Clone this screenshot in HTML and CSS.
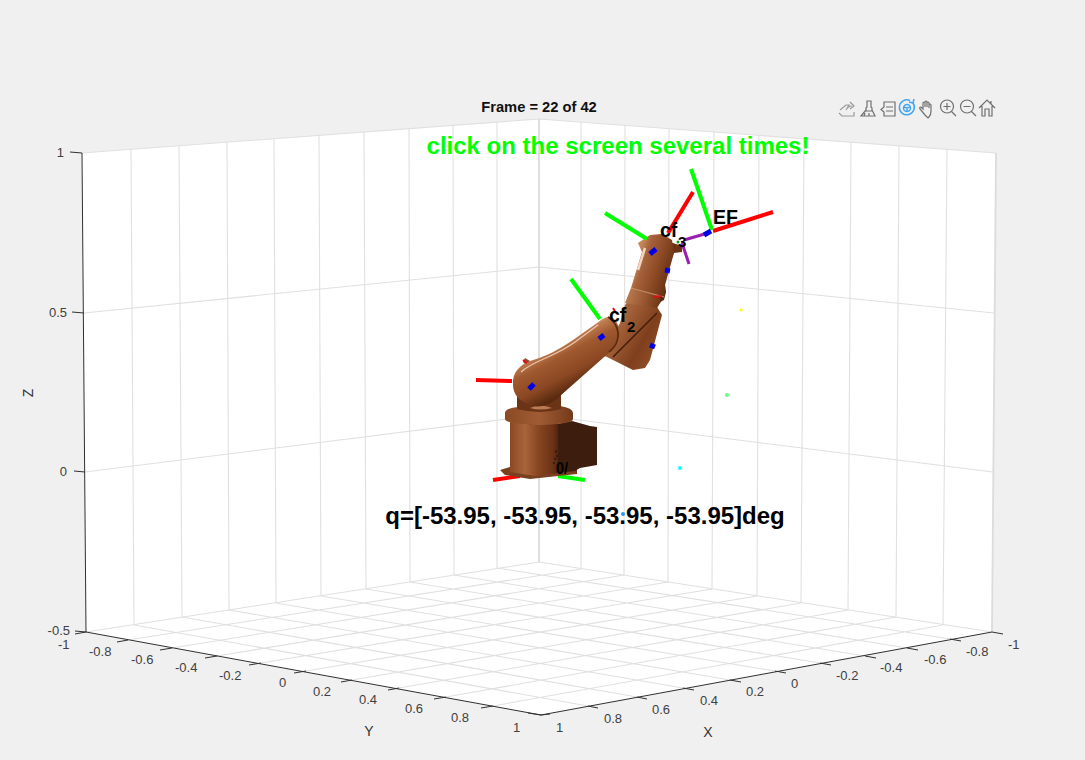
FILE: index.html
```html
<!DOCTYPE html>
<html lang="en">
<head>
<meta charset="utf-8">
<title>Frame = 22 of 42</title>
<link rel="stylesheet" href="styles.css">
</head>
<body>
<svg class="figure" width="1085" height="760" viewBox="0 0 1085 760" xmlns="http://www.w3.org/2000/svg">
<defs>
<linearGradient id="g-base" gradientUnits="userSpaceOnUse" x1="510" x2="560" y1="0" y2="0"><stop offset="0" stop-color="#8c4824"/><stop offset=".3" stop-color="#a8653c"/><stop offset=".55" stop-color="#8a4722"/><stop offset=".85" stop-color="#6b3316"/><stop offset="1" stop-color="#47210d"/></linearGradient>
<linearGradient id="g-flange" gradientUnits="userSpaceOnUse" x1="505" x2="573" y1="0" y2="0"><stop offset="0" stop-color="#8a4a24"/><stop offset=".5" stop-color="#a05c34"/><stop offset="1" stop-color="#74391a"/></linearGradient>
<linearGradient id="g-lower" gradientUnits="userSpaceOnUse" x1="546" x2="570" y1="344" y2="390"><stop offset="0" stop-color="#f0c8ae"/><stop offset=".12" stop-color="#c07d52"/><stop offset=".35" stop-color="#a0592f"/><stop offset=".72" stop-color="#8a4722"/><stop offset="1" stop-color="#5a2a10"/></linearGradient>
<linearGradient id="g-upper" gradientUnits="userSpaceOnUse" x1="636" x2="672" y1="262" y2="274"><stop offset="0" stop-color="#c58558"/><stop offset=".2" stop-color="#a5613a"/><stop offset=".6" stop-color="#8a4824"/><stop offset="1" stop-color="#643014"/></linearGradient>
<linearGradient id="g-band" gradientUnits="userSpaceOnUse" x1="628" x2="662" y1="294" y2="302"><stop offset="0" stop-color="#b87a50"/><stop offset=".45" stop-color="#9c5a32"/><stop offset="1" stop-color="#6a3315"/></linearGradient>
<linearGradient id="g-elbow" gradientUnits="userSpaceOnUse" x1="622" x2="662" y1="322" y2="345"><stop offset="0" stop-color="#a5623a"/><stop offset=".6" stop-color="#7f3f1d"/><stop offset="1" stop-color="#8f4e28"/></linearGradient>
</defs>
<polygon class="wall" points="82,153 539,119 996,153 992,632 541,715 86,632"/>
<path class="grid" d="M82 153L539 119L996 153M84 313L539 267L994 313M85 472L539 415L993 472M86 632L539 562L992 632"/>
<path class="grid" d="M131 149L134 625M179 146L182 617M227 142L229 610M274 139L276 603M319 135L321 596M364 132L366 589M409 129L410 582M453 125L454 575M497 122L497 568M581 122L581 569M625 125L624 575M669 129L668 582M714 132L712 589M759 135L757 596M804 139L801 603M851 142L848 610M899 146L896 617M947 149L943 625"/>
<path class="grid-strong" d="M539 119L539 562M996 153L992 632"/>
<path class="grid" d="M128 640L581 569M172 648L624 575M217 656L668 582M261 663L712 589M306 671L757 596M352 680L801 603M399 688L848 610M446 697L896 617M493 706L943 625M134 625L588 706M182 617L637 697M229 610L683 688M276 603L730 680M321 596L775 671M366 589L820 663M410 582L865 656M454 575L907 648M497 568L950 639"/>
<path class="axis" d="M82 153L86 632L541 715L992 632"/>
<path class="axis" d="M82 153L70 152M84 313L72 312M85 472L74 471M86 632L75 631M86 632L75 634M128 640L117 642M172 648L160 650M217 656L205 658M261 663L249 665M306 671L294 673M352 680L341 682M399 688L388 690M446 697L434 699M493 706L481 708M541 715L528 713M541 715L550 714M588 706L598 708M637 697L647 699M683 688L694 690M730 680L741 682M775 671L786 673M820 663L831 665M865 656L876 658M907 648L918 650M950 639L961 641M992 632L1003 634"/>
<g class="tick">
<text class="end" x="64" y="157">1</text><text class="end" x="67" y="317">0.5</text><text class="end" x="67" y="476">0</text><text class="end" x="70" y="635">-0.5</text>
<text x="58" y="649">-1</text><text x="89" y="656">-0.8</text><text x="131" y="664">-0.6</text><text x="175" y="672">-0.4</text><text x="219" y="680">-0.2</text><text x="279" y="687">0</text><text x="313" y="696">0.2</text><text x="359" y="704">0.4</text><text x="405" y="713">0.6</text><text x="451" y="722">0.8</text><text x="513" y="732">1</text>
<text x="556" y="732">1</text><text x="604" y="723">0.8</text><text x="652" y="714">0.6</text><text x="700" y="705">0.4</text><text x="746" y="696">0.2</text><text x="791" y="688">0</text><text x="836" y="680">-0.2</text><text x="880" y="672">-0.4</text><text x="924" y="664">-0.6</text><text x="966" y="656">-0.8</text><text x="1008" y="649">-1</text>
</g>
<text class="label" x="369" y="736" text-anchor="middle">Y</text>
<text class="label" x="708" y="737" text-anchor="middle">X</text>
<text class="label" transform="translate(33 393) rotate(-90)" text-anchor="middle">Z</text>
<text class="title" x="539" y="112" text-anchor="middle">Frame = 22 of 42</text>
<g class="icons">
<path class="faint" d="M840 110l6-5h3l-3 5M839 113l3 3h12v-4M846 110q2-4 6-4M850 102l4 4-4 3"/>
<path d="M867 101h4v6l1 1v3h-6v-3l1-1zM866 110l-5 6h14l-3-6M865 113l-1 3M869 113v3"/>
<path d="M884 102h11v14h-11v-4l-3-2.500 3-2.500zM886 107h7M886 111h7"/>
<g class="active"><path d="M913 103a7.500 7.500 0 1 1-3-2.500"/><circle cx="907" cy="108" r="3.500"/><path d="M914 99l-1 4-4-1"/><path d="M904 107l3 1 3-1M907 108v3"/></g>
<path d="M925 115l-5-6q-1-2 1-2l2 2v-6q1-2 2 0v4v-5q1-2 2 0v5v-4q1-2 2 0v5v-3q1-2 2 0v6q0 4-2 6l-1 1z"/>
<circle cx="947" cy="106.500" r="6.500"/><path d="M951.500 111.500l4.500 4.500M943.500 106.500h7M947 103v7"/>
<circle cx="967" cy="106.500" r="6.500"/><path d="M971.500 111.500l4.500 4.500M963.500 106.500h7"/>
<path d="M979 108l8-8 8 8M982 106v10h3v-7h4v7h3v-10M991 104v-3"/>
</g>
<text class="hint" x="618" y="154" text-anchor="middle">click on the screen several times!</text>
<path class="red" d="M476 380L512 381M493 480L520 476"/>
<path class="green" d="M558 476L585 480"/>
<g class="robot">
<path fill="#7a3f1e" d="M500 470L510 467H557L577 470V474L558 476L530 479L505 475Z"/>
<path fill="#3d1d0d" d="M557 424L572 421L590 426L597 427V465L580 468L575 471L557 473Z"/>
<path fill="url(#g-base)" d="M510 418H558V473L535 476L510 472Z"/>
<path class="speck" d="M556 450v3M557 455v2M555 458v2M554 462v2M530 424h1M537 423h1M545 424h1"/>
<path fill="url(#g-flange)" d="M505 413Q505 408 520 407L560 406Q573 408 573 413V419Q573 424 540 425Q505 424 505 419Z"/>
<path fill="#6b3416" d="M517 392H561V409Q540 415 517 409Z"/>
<path fill="#bb7c55" d="M530 408Q540 403 552 408Q540 411 530 408Z"/>
<path fill="#8f4e2a" d="M530 361L525 358L523 362L527 366Z"/>
<path fill="url(#g-elbow)" d="M625 305L632 297L657 307L662 315L650 360L645 368L633 370L603 355L620 323Z"/>
<path class="seam" d="M657 313L613 357"/>
<path fill="url(#g-band)" d="M631 288L664 297L657 308L625 303Z"/>
<path fill="#5c2a11" d="M660 285L665 284L666 292L664 300L660 302Z"/>
<path fill="#6b3416" d="M664 240L682 246L682 252L674 253L668 262Z"/>
<path fill="url(#g-upper)" d="M631 288L642 252L638 243L650 235L662 234L672 240L674 253L665 285L664 297Z"/>
<path class="shine" d="M645 248L638 270"/>
<path class="seam-soft" d="M631 288L664 297"/>
<path fill="url(#g-lower)" d="M513 385C512 372 520 365 530 361C545 357 560 349 573 340L597 323C604 317 610 314 615 320C621 328 622 338 615 346C612 351 607 355 603 358L560 396C552 404 540 409 530 405C519 401 513 394 513 385Z"/>
<path class="rim" d="M608 317C616 322 621 332 616 344C614 348 611 350 609 352"/>
<path class="shine-thin" d="M521 372C532 361 555 357 575 342L598 325"/>
</g>
<path class="red" d="M713 231L773 212M668 233L693 192"/>
<path class="red-thin" d="M523 360L527 363M613 308L616 313M653 297L662 296"/>
<path class="green" d="M571 279L600 319M605 213L647 239M691 169L712 230"/>
<path class="purple" d="M684 240L708 233M682 243L689 264"/>
<path class="blue" d="M529 389L534 384M599 339L604 335M650 254L656 249M650 345L655 347M704 235L711 231M668 268L667 273"/>
<circle class="dark-green" cx="678" cy="242" r="1.500"/>
<text class="frame-sm" x="556" y="474" textLength="12" lengthAdjust="spacingAndGlyphs">0/</text>
<text class="frame" x="609" y="322">cf</text><text class="sub" x="627" y="332">2</text>
<text class="frame" x="660" y="237">cf</text><text class="sub" x="678" y="247">3</text>
<text class="frame" x="713" y="224">EF</text>
<circle cx="741" cy="310" r="1.500" class="pt-yellow"/>
<circle cx="727" cy="395" r="2" class="pt-green"/>
<circle cx="680" cy="468" r="2" class="pt-cyan"/>
<text class="q" x="585" y="524" text-anchor="middle">q=[-53.95, -53.95, -53.95, -53.95]deg</text>
<circle cx="623" cy="514" r="2" class="pt-blue"/>
</svg>
</body>
</html>
```
FILE: styles.css
```css
html,body{margin:0;padding:0;background:#f0f0f0;overflow:hidden}
.figure{display:block;font-family:"Liberation Sans",Arial,sans-serif}
.wall{fill:#fff}
.grid{fill:none;stroke:#e0e0e0;stroke-width:1.1}
.grid-strong{fill:none;stroke:#dcdcdc;stroke-width:1.8}
.axis{fill:none;stroke:#303030;stroke-width:1}
.tick text{font-size:13px;fill:#404040}
.tick .end{text-anchor:end}
.label{font-size:14px;fill:#333}
.title{font-size:14.7px;font-weight:700;fill:#111}
.hint{font-size:24px;font-weight:700;fill:#0f0}
.q{font-size:24px;font-weight:700;fill:#000}
.frame{font-size:19.5px;font-weight:700;fill:#000}
.frame-sm{font-size:17px;font-weight:700;fill:#000}
.sub{font-size:15px;font-weight:700;fill:#000}
.icons{fill:none;stroke:#707070;stroke-width:1.2}
.faint{stroke:#9a9a9a}
.active{stroke:#45a5f0;stroke-width:1.5}
.red,.green,.purple,.blue,.red-thin{fill:none}
.red{stroke:#f00;stroke-width:4}
.red-thin{stroke:#e01010;stroke-width:2}
.green{stroke:#0f0;stroke-width:4}
.purple{stroke:#9a1fb0;stroke-width:3}
.blue{stroke:#0000e6;stroke-width:5}
.dark-green{fill:#0a9a1a}
.speck{fill:none;stroke:#1e0f06;stroke-width:1}
.seam{fill:none;stroke:#3f1c0a;stroke-width:1.4}
.seam-soft{fill:none;stroke:#c08a66;stroke-width:1.2}
.shine{fill:none;stroke:#f2d5c0;stroke-width:2.5}
.shine-thin{fill:none;stroke:#ecc6ae;stroke-width:1.2}
.rim{fill:none;stroke:#5a2a10;stroke-width:1.6}
.pt-yellow{fill:#ff0}
.pt-green{fill:#66ff88}
.pt-cyan{fill:#1ff}
.pt-blue{fill:#29f}
```
